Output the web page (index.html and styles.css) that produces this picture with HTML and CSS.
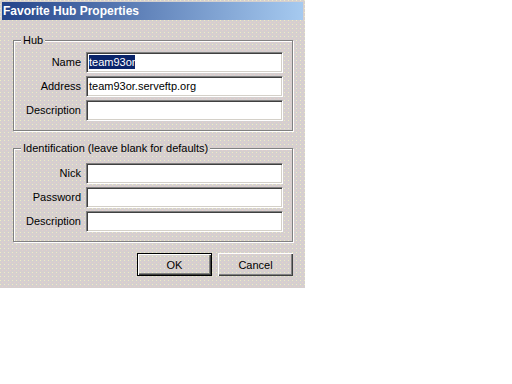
FILE: index.html
```html
<html>
<head>
<link rel="stylesheet" href="styles.css">
</head>
<body>
  <div class="dialog">
    <div class="titlebar">Favorite Hub Properties</div>

    <fieldset class="group hub">
      <legend>Hub</legend>
      <div class="rows">
        <label>Name</label>
        <div class="field"><span class="sel">team93or</span></div>
        <label>Address</label>
        <div class="field">team93or.serveftp.org</div>
        <label>Description</label>
        <div class="field"></div>
      </div>
    </fieldset>

    <fieldset class="group ident">
      <legend>Identification (leave blank for defaults)</legend>
      <div class="rows">
        <label>Nick</label>
        <div class="field"></div>
        <label>Password</label>
        <div class="field"></div>
        <label>Description</label>
        <div class="field"></div>
      </div>
    </fieldset>

    <div class="buttons">
      <button class="btn default">OK</button>
      <button class="btn">Cancel</button>
    </div>
  </div>
</body>
</html>
```

FILE: styles.css
```css
body
{
  margin: 0;
  background: #fff;
  font-family: "Liberation Sans", Arial, sans-serif;
  font-size: 11px;
  color: #000;
}

/* dithered button-face, fixed so legends line up with the dialog */
.dialog, .group legend
{
  background-color: #d5cfcf;
  background-image:
    conic-gradient(from 270deg at 1px 1px, #eeecc4 25%, transparent 0),
    conic-gradient(from 270deg at 1px 1px, #e6cccc 25%, transparent 0);
  background-size: 4px 4px, 4px 4px;
  background-position: 0 0, 2px 2px;
  background-attachment: fixed;
}

.dialog
{
  width: 305px;
  height: 288px;
  box-sizing: border-box;
  padding: 2px 2px 0 2px;
}

.titlebar
{
  height: 18px;
  line-height: 18px;
  padding-left: 1px;
  background: linear-gradient(to right, #24448a, #a6caf0);
  color: #fff;
  font-weight: bold;
  font-size: 12px;
}

.group
{
  margin: 14px 0 0 11px;
  width: 280px;
  box-sizing: border-box;
  border: 1px solid #808080;
  box-shadow: inset 1px 1px 0 #fff, 1px 1px 0 #fff;
  padding: 5px 9px 9px 0;
  min-inline-size: 0;
}

.group legend
{
  margin-left: 7px;
  padding: 0 2px;
  line-height: 13px;
}

.ident
{
  margin-top: 11px;
  padding-top: 8px;
}

.rows
{
  display: grid;
  grid-template-columns: 67px 197px;
  column-gap: 5px;
  row-gap: 3px;
}

.rows label
{
  text-align: right;
  line-height: 21px;
}

.field
{
  height: 21px;
  box-sizing: border-box;
  background: #fff;
  border: 1px solid;
  border-color: #808080 #fff #fff #808080;
  box-shadow: inset 1px 1px 0 #404040, inset -1px -1px 0 #d4d0c8;
  padding-left: 2px;
  line-height: 19px;
  white-space: nowrap;
  overflow: hidden;
}

.sel
{
  background: #0a246a;
  color: #fff;
  padding: 1px 0;
}

.buttons
{
  display: flex;
  justify-content: flex-end;
  gap: 6px;
  width: 280px;
  margin: 11px 0 0 11px;
}

.btn
{
  width: 75px;
  height: 23px;
  padding: 0;
  font-family: inherit;
  font-size: 11px;
  color: #000;
  background: transparent;
  border: none;
  box-shadow: inset 1px 1px 0 #fff, inset -1px -1px 0 #404040, inset -2px -2px 0 #808080;
}

.btn.default
{
  border: 1px solid #000;
}
```
